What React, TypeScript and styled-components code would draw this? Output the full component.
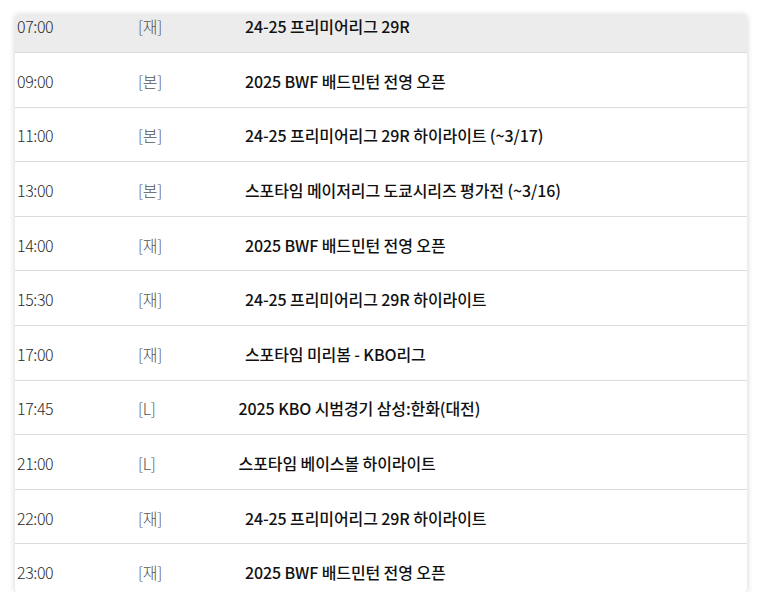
import styled, { createGlobalStyle } from "styled-components";

const GlobalStyle = createGlobalStyle`
  html, body {
    margin: 0;
    padding: 0;
    background: #ffffff;
  }
  body {
    font-family: "Noto Sans CJK KR", "Noto Sans", sans-serif;
  }
`;

const Page = styled.div`
  padding: 14px 15px 0 15px;
`;

const Card = styled.div`
  height: 578px;
  overflow: hidden;
  background: #ffffff;
  border-radius: 4px;
  box-shadow: 0 1px 6px rgba(0, 0, 0, 0.18);
`;

const List = styled.ul`
  list-style: none;
  margin: -15.6px 0 0 0;
  padding: 0;
`;

const Row = styled.li<{ $active?: boolean }>`
  display: flex;
  align-items: center;
  box-sizing: border-box;
  height: 54.6px;
  padding: 2px 2px 0 2px;
  border-bottom: 1px solid #dcdcdc;
  background: ${(p) => (p.$active ? "#ececec" : "#ffffff")};
`;

const Time = styled.span`
  width: 121px;
  flex: none;
  font-size: 16px;
  font-weight: 300;
  color: #2a2a2a;
  letter-spacing: -0.4px;
`;

const Tag = styled.span`
  flex: none;
  font-size: 16px;
  font-weight: 300;
  color: #555555;
  letter-spacing: -0.3px;
`;

const Title = styled.span`
  margin-left: 83px;
  font-size: 16px;
  font-weight: 500;
  color: #111111;
  letter-spacing: -0.1px;
`;

type Item = { time: string; tag: string; title: string };

const items: Item[] = [
  { time: "07:00", tag: "재", title: "24-25 프리미어리그 29R" },
  { time: "09:00", tag: "본", title: "2025 BWF 배드민턴 전영 오픈" },
  { time: "11:00", tag: "본", title: "24-25 프리미어리그 29R 하이라이트 (~3/17)" },
  { time: "13:00", tag: "본", title: "스포타임 메이저리그 도쿄시리즈 평가전 (~3/16)" },
  { time: "14:00", tag: "재", title: "2025 BWF 배드민턴 전영 오픈" },
  { time: "15:30", tag: "재", title: "24-25 프리미어리그 29R 하이라이트" },
  { time: "17:00", tag: "재", title: "스포타임 미리봄 - KBO리그" },
  { time: "17:45", tag: "L", title: "2025 KBO 시범경기 삼성:한화(대전)" },
  { time: "21:00", tag: "L", title: "스포타임 베이스볼 하이라이트" },
  { time: "22:00", tag: "재", title: "24-25 프리미어리그 29R 하이라이트" },
  { time: "23:00", tag: "재", title: "2025 BWF 배드민턴 전영 오픈" },
];

export default function App() {
  return (
    <>
      <GlobalStyle />
      <Page>
        <Card>
          <List>
            {items.map((it, i) => (
              <Row key={i} $active={i === 0}>
                <Time>{it.time}</Time>
                <Tag>[{it.tag}]</Tag>
                <Title>{it.title}</Title>
              </Row>
            ))}
          </List>
        </Card>
      </Page>
    </>
  );
}
